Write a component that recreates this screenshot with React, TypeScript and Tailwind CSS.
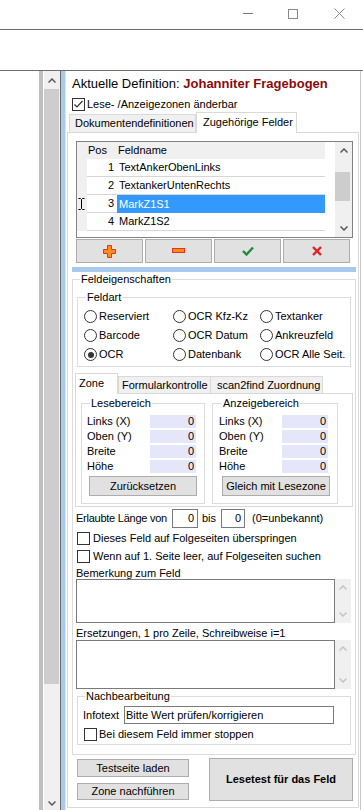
import React from "react";

const btn = "bg-[#e1e1e1] border border-[#adadad] flex items-center justify-center";

function Chevron({ up = false, color = "#5a5a5a" }: { up?: boolean; color?: string }) {
  return (
    <svg width="8" height="5" viewBox="0 0 8 5">
      <path d={up ? "M0.5 4.5L4 1L7.5 4.5" : "M0.5 0.5L4 4L7.5 0.5"} fill="none" stroke={color} strokeWidth="1.5" />
    </svg>
  );
}

function CheckBox({ checked = false }: { checked?: boolean }) {
  return (
    <span className="w-[13px] h-[13px] shrink-0 border border-[#333] bg-white flex items-center justify-center">
      {checked && (
        <svg width="11" height="11" viewBox="0 0 11 11">
          <path d="M1.5 5.5L4 8L9.5 2" fill="none" stroke="#333" strokeWidth="1.2" />
        </svg>
      )}
    </span>
  );
}

function Radio({ label, checked = false }: { label: string; checked?: boolean }) {
  return (
    <div className="flex items-center h-[19px] whitespace-nowrap">
      <span className="w-[13px] h-[13px] shrink-0 rounded-full border border-[#333] bg-white flex items-center justify-center">
        {checked && <span className="w-[6px] h-[6px] rounded-full bg-[#333]" />}
      </span>
      <span className="ml-[2px]">{label}</span>
    </div>
  );
}

function Legend({ text, ml }: { text: string; ml: string }) {
  return <legend className={`${ml} px-[1px] leading-[13px]`}>{text}</legend>;
}

function MemoBox({ h }: { h: string }) {
  return (
    <div className={`-ml-[1px] flex ${h}`}>
      <div className="w-[259px] border border-[#7a7a7a]" />
      <div className="w-[16px] bg-[#f0f0f0] flex flex-col justify-between items-center py-[6px]">
        <Chevron up color="#c4c4c4" />
        <Chevron color="#c4c4c4" />
      </div>
    </div>
  );
}

const coords = ["Links (X)", "Oben (Y)", "Breite", "Höhe"];

function CoordRows() {
  return (
    <>
      {coords.map((c) => (
        <div key={c} className="flex items-center h-[15px]">
          <span className="w-[63px]">{c}</span>
          <span className="w-[46px] h-[13px] bg-[#e6e6fa] text-right pr-[2px] leading-[13px]">0</span>
        </div>
      ))}
    </>
  );
}

const felder = [
  { pos: 1, name: "TextAnkerObenLinks" },
  { pos: 2, name: "TextankerUntenRechts" },
  { pos: 3, name: "MarkZ1S1", sel: true },
  { pos: 4, name: "MarkZ1S2" },
];

const feldart = [
  "Reserviert", "OCR Kfz-Kz", "Textanker",
  "Barcode", "OCR Datum", "Ankreuzfeld",
  "OCR", "Datenbank", "OCR Alle Seit.",
];

function FieldList() {
  return (
    <div className="mt-[8px] ml-[8px] w-[277px] h-[97px] border border-[#828282] flex">
      <div className="flex-1 flex flex-col">
        <div className="flex h-[17px]">
          <div className="w-[10px] bg-[#f0f0f0]" />
          <div className="w-[30px] bg-[#f0f0f0] pl-[1px] leading-[17px]">Pos</div>
          <div className="w-[208px] bg-[#f0f0f0] pl-[1px] leading-[17px]">Feldname</div>
        </div>
        {felder.map((f) => (
          <div key={f.pos} className="flex h-[18px]">
            <div className="w-[10px] bg-[#f0f0f0] pl-[1px] flex items-center">
              {f.sel && (
                <svg width="7" height="12" viewBox="0 0 7 12">
                  <path d="M0.5 0.5H2.5L3.5 1.5L4.5 0.5H6.5M3.5 1.5V10.5M0.5 11.5H2.5L3.5 10.5L4.5 11.5H6.5" fill="none" stroke="#000" />
                </svg>
              )}
            </div>
            <div className="w-[30px] border-b border-[#d6d6d6] text-right pr-[3px] leading-[17px]">{f.pos}</div>
            <div
              className={
                f.sel
                  ? "w-[208px] bg-[#3399ff] text-white pl-[2px] leading-[18px]"
                  : "w-[208px] border-b border-[#d6d6d6] pl-[2px] leading-[17px]"
              }
            >
              {f.name}
            </div>
          </div>
        ))}
      </div>
      <div className="w-[17px] bg-[#f0f0f0] flex flex-col">
        <div className="h-[17px] flex items-center justify-center">
          <Chevron up />
        </div>
        <div className="mt-[13px] h-[29px] mr-[2px] bg-[#cdcdcd]" />
        <div className="flex-1" />
        <div className="h-[17px] flex items-center justify-center">
          <Chevron />
        </div>
      </div>
    </div>
  );
}

function ListButtons() {
  return (
    <div className="mt-[1px] ml-[8px] flex gap-[2px]">
      <div className={`${btn} w-[67px] h-[24px]`}>
        <svg width="13" height="13" viewBox="0 0 13 13">
          <path d="M4.5 0.5H8.5V4.5H12.5V8.5H8.5V12.5H4.5V8.5H0.5V4.5H4.5Z" fill="#ff8c1a" stroke="#e2341c" />
        </svg>
      </div>
      <div className={`${btn} w-[67px] h-[24px]`}>
        <svg width="13" height="6" viewBox="0 0 13 6">
          <rect x="0.5" y="0.5" width="12" height="4" fill="#ff8c1a" stroke="#e2341c" />
        </svg>
      </div>
      <div className={`${btn} w-[67px] h-[24px]`}>
        <svg width="12" height="10" viewBox="0 0 12 10">
          <path d="M1 5L4.5 8.5L11 1.5" fill="none" stroke="#1e8a3a" strokeWidth="2.4" />
        </svg>
      </div>
      <div className={`${btn} w-[67px] h-[24px]`}>
        <svg width="10" height="10" viewBox="0 0 10 10">
          <path d="M1 1L9 9M9 1L1 9" stroke="#e32020" strokeWidth="2.4" />
        </svg>
      </div>
    </div>
  );
}

function Feldeigenschaften() {
  return (
    <fieldset className="mt-[1px] ml-[4px] w-[283px] border border-[#dcdcdc]">
      <Legend text="Feldeigenschaften" ml="ml-[7px]" />
      <div className="pl-[4px] pr-[2px] pb-[9px]">
        <fieldset className="mt-[5px] w-[274px] border border-[#dcdcdc]">
          <Legend text="Feldart" ml="ml-[8px]" />
          <div className="grid grid-cols-[89px_87px_1fr] pl-[6px] pt-[3px] pb-[2px]">
            {feldart.map((f) => (
              <Radio key={f} label={f} checked={f === "OCR"} />
            ))}
          </div>
        </fieldset>

        {/* Zone tabs */}
        <div className="mt-[6px] -ml-[2px] h-[20px] flex items-end relative z-10">
          <div className="w-[43px] h-[21px] -mb-[1px] border border-b-0 border-[#d9d9d9] bg-white pl-[3px] leading-[19px]">Zone</div>
          <div className="w-[93px] h-[17px] border border-b-0 border-[#d9d9d9] bg-[#f0f0f0] pl-[3px] leading-[16px] whitespace-nowrap">Formularkontrolle</div>
          <div className="w-[112px] h-[17px] border border-b-0 border-l-0 border-[#d9d9d9] bg-[#f0f0f0] pl-[6px] leading-[16px] whitespace-nowrap">scan2find Zuordnung</div>
        </div>
        <div className="-ml-[2px] w-[278px] border border-[#d9d9d9] pt-[3px] pb-[2px] pl-[5px] flex gap-[7px]">
          <fieldset className="w-[124px] border border-[#dcdcdc]">
            <Legend text="Lesebereich" ml="ml-[8px]" />
            <div className="pl-[5px] pt-[4px] pb-[7px]">
              <CoordRows />
              <div className={`${btn} mt-[2px] ml-[2px] w-[108px] h-[20px]`}>Zurücksetzen</div>
            </div>
          </fieldset>
          <fieldset className="w-[126px] border border-[#dcdcdc]">
            <Legend text="Anzeigebereich" ml="ml-[9px]" />
            <div className="pl-[6px] pt-[4px] pb-[7px]">
              <CoordRows />
              <div className={`${btn} mt-[2px] ml-[3px] w-[108px] h-[20px] whitespace-nowrap`}>Gleich mit Lesezone</div>
            </div>
          </fieldset>
        </div>

        <div className="mt-[2px] -ml-[1px] flex items-center h-[19px] whitespace-nowrap">
          <span className="w-[96px] tracking-[-0.25px]">Erlaubte Länge von</span>
          <span className="w-[26px] h-[19px] border border-[#7a7a7a] text-right pr-[3px] leading-[17px]">0</span>
          <span className="w-[23px] pl-[4px]">bis</span>
          <span className="w-[24px] h-[19px] border border-[#7a7a7a] text-right pr-[3px] leading-[17px]">0</span>
          <span className="pl-[7px]">(0=unbekannt)</span>
        </div>
        <div className="mt-[4px] flex items-center h-[13px]">
          <CheckBox />
          <span className="ml-[3px]">Dieses Feld auf Folgeseiten überspringen</span>
        </div>
        <div className="mt-[5px] flex items-center h-[13px]">
          <CheckBox />
          <span className="ml-[3px]">Wenn auf 1. Seite leer, auf Folgeseiten suchen</span>
        </div>
        <div className="mt-[4px] -ml-[1px] h-[12px] leading-[12px]">Bemerkung zum Feld</div>
        <MemoBox h="h-[44px]" />
        <div className="mt-[4px] -ml-[1px] h-[13px] leading-[13px]">Ersetzungen, 1 pro Zeile, Schreibweise i=1</div>
        <MemoBox h="h-[49px]" />

        <fieldset className="mt-[1px] w-[274px] border border-[#dcdcdc]">
          <Legend text="Nachbearbeitung" ml="ml-[7px]" />
          <div className="pl-[5px] pb-[3px]">
            <div className="mt-[3px] flex items-center h-[18px]">
              <span className="w-[41px]">Infotext</span>
              <span className="w-[210px] h-[18px] border border-[#7a7a7a] pl-[1px] leading-[16px] whitespace-nowrap">Bitte Wert prüfen/korrigieren</span>
            </div>
            <div className="mt-[4px] ml-[1px] flex items-center h-[13px]">
              <CheckBox />
              <span className="ml-[2px]">Bei diesem Feld immer stoppen</span>
            </div>
          </div>
        </fieldset>
      </div>
    </fieldset>
  );
}

function Panel() {
  return (
    <div className="w-[296px] shrink-0 border-l border-r border-l-[#e3e3e3] border-r-[#c8c8c8] flex flex-col">
      <div className="mt-[5px] h-[16px] pl-[6px] text-[13px] leading-[16px] whitespace-nowrap">
        Aktuelle Definition: <span className="font-bold text-[#8b0a0a]">Johanniter Fragebogen</span>
      </div>
      <div className="mt-[5px] h-[15px] pl-[6px] flex items-center">
        <CheckBox checked />
        <span className="ml-[2px]">Lese- /Anzeigezonen änderbar</span>
      </div>
      <div className="h-[20px] pl-[3px] flex items-end relative z-10">
        <div className="w-[127px] h-[18px] border border-b-0 border-[#d9d9d9] bg-[#f0f0f0] pl-[5px] leading-[17px] whitespace-nowrap">Dokumentendefinitionen</div>
        <div className="w-[101px] h-[21px] -mb-[1px] border border-b-0 border-[#d9d9d9] bg-white pl-[6px] leading-[18px] whitespace-nowrap">Zugehörige Felder</div>
      </div>
      <div className="ml-[1px] w-[292px] border border-[#d9d9d9] flex flex-col pb-[6px]">
        <FieldList />
        <ListButtons />
        <div className="mt-[4px] ml-[4px] w-[284px] h-[5px] bg-[#a9c9ef]" />
        <Feldeigenschaften />
        <div className="mt-[3px] ml-[9px] flex">
          <div className="flex flex-col">
            <div className={`${btn} mt-[1px] w-[112px] h-[18px]`}>Testseite laden</div>
            <div className={`${btn} mt-[6px] w-[112px] h-[17px]`}>Zone nachführen</div>
          </div>
          <div className={`${btn} ml-[20px] w-[144px] h-[43px] font-bold`}>Lesetest für das Feld</div>
        </div>
      </div>
    </div>
  );
}

export default function App() {
  return (
    <div className="w-[363px] h-[810px] overflow-hidden bg-white text-black text-[11px] leading-[13px] font-['Liberation_Sans',Arial,sans-serif] flex flex-col">
      <div className="h-[30px] shrink-0 border-b border-[#6d6d6d] flex items-start pt-[8px] pl-[243px]">
        <svg width="11" height="11" viewBox="0 0 11 11">
          <path d="M0 5.5H10" stroke="#7a7a7a" />
        </svg>
        <svg className="ml-[34px]" width="11" height="11" viewBox="0 0 11 11">
          <rect x="0.5" y="1.5" width="9" height="9" fill="none" stroke="#8a8a8a" />
        </svg>
        <svg className="ml-[35px]" width="11" height="11" viewBox="0 0 11 11">
          <path d="M0.5 0.5L10.5 10.5M10.5 0.5L0.5 10.5" stroke="#8a8a8a" />
        </svg>
      </div>
      <div className="h-[41px] shrink-0 border-b border-[#6d6d6d]" />
      <div className="flex h-[739px]">
        <div className="w-[39px] shrink-0" />
        <div className="w-[4px] shrink-0 bg-[#bfbfbf]" />
        <div className="w-[17px] shrink-0 bg-[#f0f0f0] border-l border-white flex flex-col">
          <div className="h-[18px] flex items-center justify-center">
            <Chevron up />
          </div>
          <div className="h-[595px] mr-[1px] bg-[#cdcdcd]" />
          <div className="flex-1" />
          <div className="h-[15px] flex justify-center pt-[6px]">
            <Chevron />
          </div>
        </div>
        <div className="w-px shrink-0 bg-[#6d6d6d]" />
        <div className="w-[4px] shrink-0 bg-[#a9c9ef]" />
        <Panel />
      </div>
    </div>
  );
}
